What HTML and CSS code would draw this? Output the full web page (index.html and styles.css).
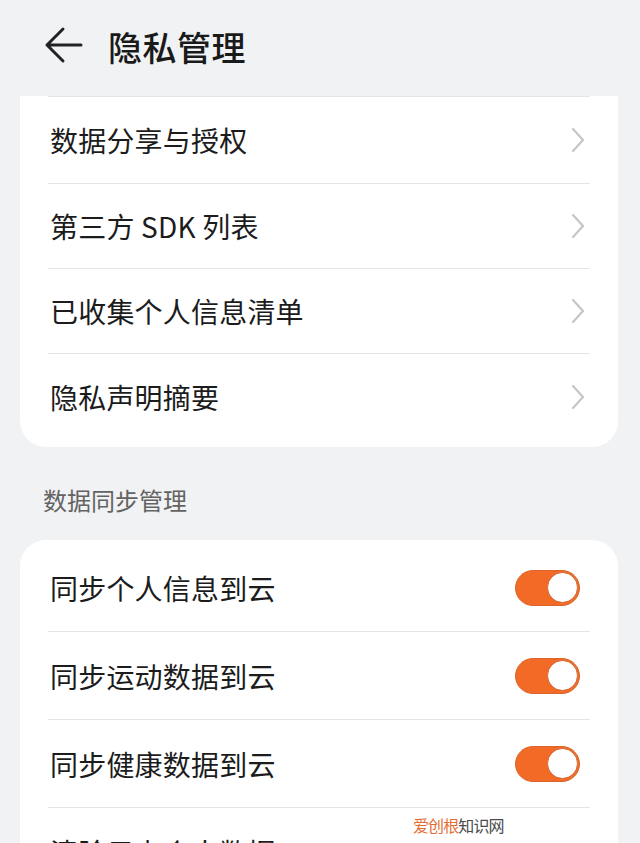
FILE: index.html
```html
<!DOCTYPE html>
<html lang="zh">
<head>
<meta charset="utf-8">
<link rel="stylesheet" href="styles.css">
</head>
<body>
<div class="page">
  <header class="header">
    <svg class="back" width="40" height="40" viewBox="0 0 40 40">
      <path d="M19 3 L3 19 L19 35 M3 19 H37" fill="none" stroke="#222" stroke-width="3" stroke-linecap="round" stroke-linejoin="round"/>
    </svg>
    <h1 class="title">隐私管理</h1>
  </header>

  <section class="card card-first">
    <div class="row"><span class="label">数据分享与授权</span><svg class="chev" width="14" height="26" viewBox="0 0 14 26"><path d="M2 2 L12 13 L2 24" fill="none" stroke="#c6c6c6" stroke-width="2.2" stroke-linecap="round" stroke-linejoin="round"/></svg></div>
    <div class="row"><span class="label">第三方 SDK 列表</span><svg class="chev" width="14" height="26" viewBox="0 0 14 26"><path d="M2 2 L12 13 L2 24" fill="none" stroke="#c6c6c6" stroke-width="2.2" stroke-linecap="round" stroke-linejoin="round"/></svg></div>
    <div class="row"><span class="label">已收集个人信息清单</span><svg class="chev" width="14" height="26" viewBox="0 0 14 26"><path d="M2 2 L12 13 L2 24" fill="none" stroke="#c6c6c6" stroke-width="2.2" stroke-linecap="round" stroke-linejoin="round"/></svg></div>
    <div class="row last"><span class="label">隐私声明摘要</span><svg class="chev" width="14" height="26" viewBox="0 0 14 26"><path d="M2 2 L12 13 L2 24" fill="none" stroke="#c6c6c6" stroke-width="2.2" stroke-linecap="round" stroke-linejoin="round"/></svg></div>
  </section>

  <div class="section-title">数据同步管理</div>

  <section class="card card-second">
    <div class="row tall"><span class="label">同步个人信息到云</span><span class="toggle"><span class="knob"></span></span></div>
    <div class="row tall"><span class="label">同步运动数据到云</span><span class="toggle"><span class="knob"></span></span></div>
    <div class="row tall"><span class="label">同步健康数据到云</span><span class="toggle"><span class="knob"></span></span></div>
    <div class="row tall last"><span class="label">清除云上个人数据</span></div>
  </section>

  <div class="watermark"><span class="wm-a">爱创根</span><span class="wm-b">知识网</span></div>
</div>
</body>
</html>
```

FILE: styles.css
```css
* { box-sizing: border-box; }
html, body {
  margin: 0;
  padding: 0;
  background: #f1f2f4;
  width: 640px;
  height: 843px;
  overflow: hidden;
  font-family: "Noto Sans CJK SC", "Noto Sans", sans-serif;
  color: #1c1c1c;
}
.page {
  position: relative;
  width: 640px;
  height: 843px;
  overflow: hidden;
}
.header {
  height: 96px;
  display: flex;
  align-items: center;
  padding-left: 44px;
  padding-bottom: 4px;
}
.back { display: block; margin-right: 24px; }
.title {
  margin: 0;
  font-size: 34px;
  font-weight: 500;
  letter-spacing: 0.5px;
  color: #1a1a1a;
}
.card {
  margin: 0 22px 0 20px;
  background: #fff;
  padding: 0 28px;
}
.card-first {
  border-top: 1px solid #e6e6e6;
  border-radius: 0 0 26px 26px;
  padding-top: 0;
  padding-bottom: 8px;
  background-clip: padding-box;
  position: relative;
}
.card-first::before {
  content: "";
  position: absolute;
  left: 0; top: -1px;
  width: 28px; height: 1px;
  background: #fff;
}
.card-first::after {
  content: "";
  position: absolute;
  right: 0; top: -1px;
  width: 28px; height: 1px;
  background: #fff;
}
.row {
  height: 85px;
  display: flex;
  align-items: center;
  justify-content: space-between;
  border-bottom: 1px solid #e4e4e4;
}
.card-first .row:first-child { height: 87px; }
.row.tall { height: 88px; }
.row.last { border-bottom: none; }
.label {
  font-size: 28px;
  padding-left: 2px;
  color: #1c1c1c;
  letter-spacing: 0.2px;
}
.chev { display: block; margin-right: 5px; }
.section-title {
  padding: 41px 0 0 43px;
  height: 93px;
  font-size: 24px;
  line-height: 24px;
  color: #636363;
}
.card-second {
  border-radius: 26px 26px 0 0;
  padding-top: 4px;
}
.toggle {
  position: relative;
  width: 65px;
  height: 36px;
  border-radius: 18px;
  background: #f26a26;
  border: 1.5px solid #d8672e;
  margin-right: 10px;
  flex: none;
}
.knob {
  position: absolute;
  right: 1px;
  top: 1px;
  width: 31px;
  height: 31px;
  border-radius: 50%;
  background: #fff;
  border: 1.5px solid #d06a35;
}
.watermark {
  position: absolute;
  left: 413px;
  top: 814px;
  font-size: 16px;
  line-height: 22px;
  letter-spacing: -0.9px;
}
.wm-a { color: #e46d33; }
.wm-b { color: #4a4a4a; }
```
